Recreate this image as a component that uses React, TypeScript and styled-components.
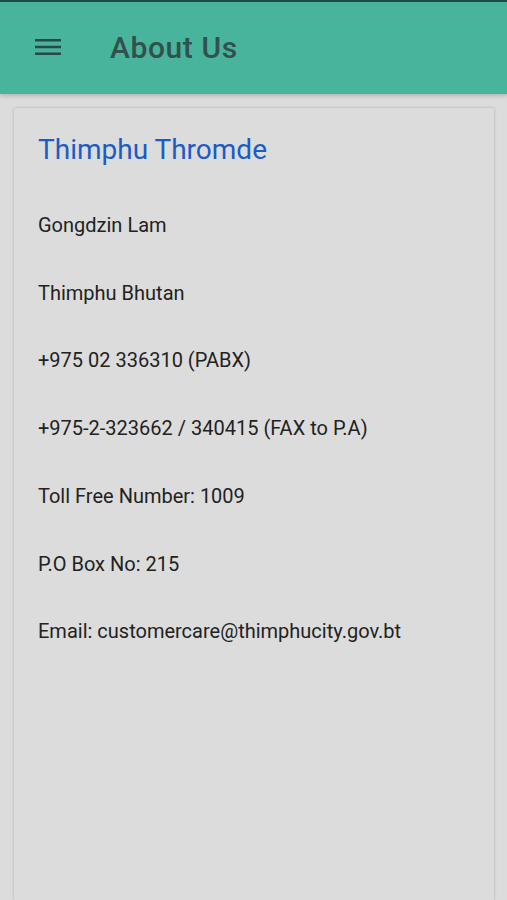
import styled, { createGlobalStyle } from "styled-components";

const GlobalStyle = createGlobalStyle`
  html, body {
    margin: 0;
    padding: 0;
    background: #dcdcdc;
    font-family: Roboto, "Noto Sans", sans-serif;
  }
`;

const Page = styled.div`
  width: 507px;
  height: 900px;
  overflow: hidden;
  display: flex;
  flex-direction: column;
  background: #dcdcdc;
`;

const Header = styled.header`
  height: 94px;
  box-sizing: border-box;
  border-top: 2px solid #1d4b46;
  background: #48b49c;
  display: flex;
  align-items: center;
  padding: 0 0 2px 34px;
  gap: 48px;
  box-shadow: 0 2px 4px rgba(0, 0, 0, 0.18);
  flex-shrink: 0;
`;

const MenuButton = styled.div`
  width: 28px;
  height: 24px;
  display: flex;
  align-items: center;
  justify-content: center;
  color: #2b4643;
`;

const Title = styled.h1`
  margin: 0;
  font-size: 30px;
  font-weight: 500;
  color: #34504c;
  letter-spacing: 0.6px;
`;

const Card = styled.section`
  flex: 1;
  margin: 14px 13px 0 14px;
  background: #dcdcdc;
  border-radius: 2px 2px 0 0;
  box-shadow: 0 0 3px rgba(0, 0, 0, 0.22);
  padding: 20px 24px;
  display: flex;
  flex-direction: column;
`;

const OrgName = styled.h2`
  margin: 0 0 20px;
  font-size: 28px;
  font-weight: 400;
  color: #1a5cc6;
  line-height: 44px;
`;

const Line = styled.p`
  margin: 0;
  font-size: 20px;
  color: #222;
  line-height: 67.7px;
`;

const lines = [
  "Gongdzin Lam",
  "Thimphu Bhutan",
  "+975 02 336310 (PABX)",
  "+975-2-323662 / 340415 (FAX to P.A)",
  "Toll Free Number: 1009",
  "P.O Box No: 215",
  "Email: customercare@thimphucity.gov.bt",
];

export default function App() {
  return (
    <>
      <GlobalStyle />
      <Page>
        <Header>
          <MenuButton>
            <svg width="26" height="18" viewBox="0 0 26 18">
              <rect x="0" y="1" width="26" height="2.5" fill="currentColor" />
              <rect x="0" y="7.75" width="26" height="2.5" fill="currentColor" />
              <rect x="0" y="14.5" width="26" height="2.5" fill="currentColor" />
            </svg>
          </MenuButton>
          <Title>About Us</Title>
        </Header>
        <Card>
          <OrgName>Thimphu Thromde</OrgName>
          {lines.map((l) => (
            <Line key={l}>{l}</Line>
          ))}
        </Card>
      </Page>
    </>
  );
}
